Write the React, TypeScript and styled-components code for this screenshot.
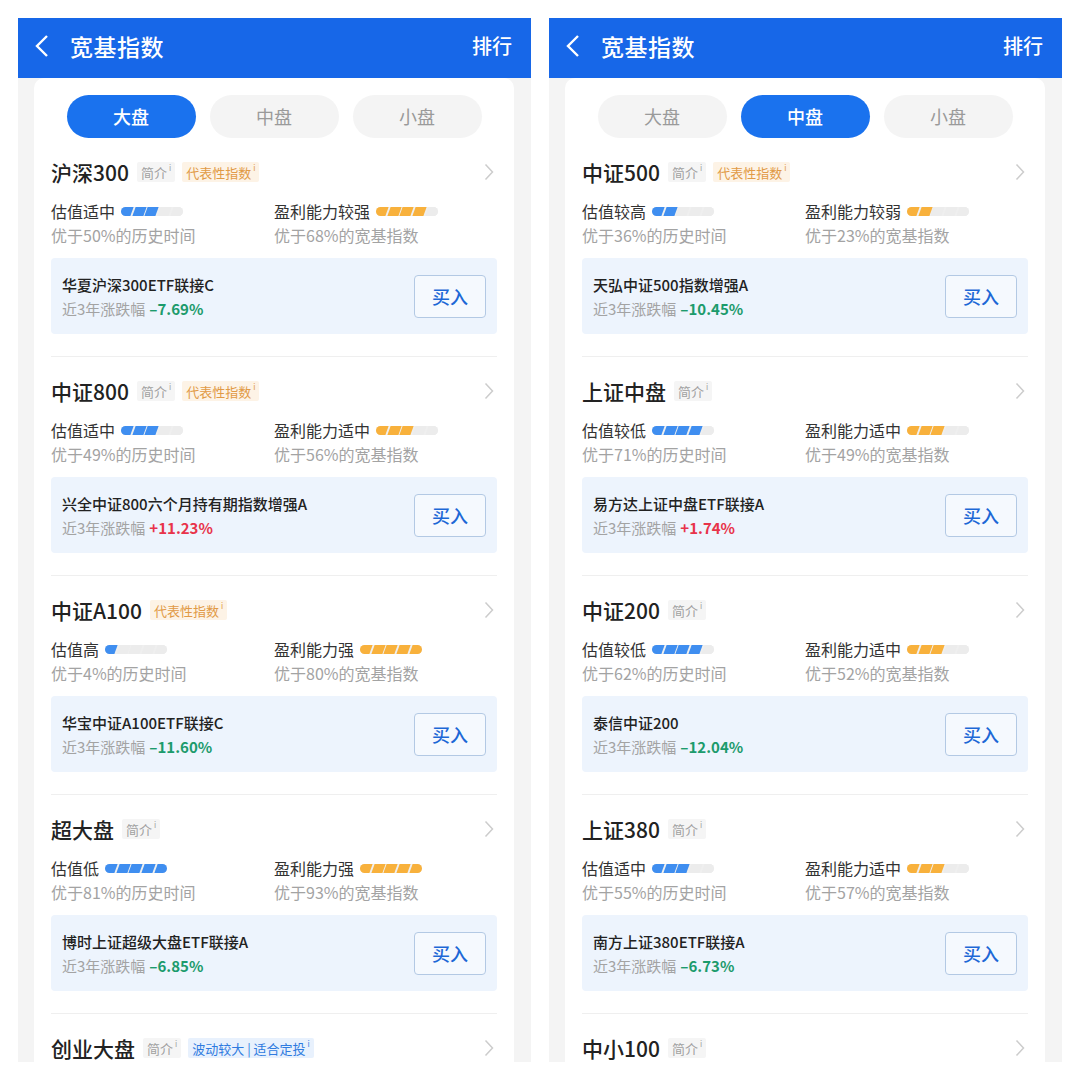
import React from "react";
import styled, { createGlobalStyle, css } from "styled-components";

type Tag = { text: string; tone: "gray" | "orange" | "blue" };

type IndexItem = {
  name: string;
  tags: Tag[];
  value?: { label: string; level: number; note: string };
  profit?: { label: string; level: number; note: string };
  fund?: { name: string; change: string };
};

type Screen = {
  active: number;
  items: IndexItem[];
};

const GlobalStyle = createGlobalStyle`
  body {
    margin: 0;
    background: #ffffff;
    font-family: "Noto Sans CJK SC", "Noto Sans", sans-serif;
  }
`;

const Page = styled.div`
  display: flex;
  gap: 18px;
  padding: 18px;
`;

const Phone = styled.div`
  width: 513px;
  height: 1044px;
  overflow: hidden;
  background: #f4f4f4;
  display: flex;
  flex-direction: column;
`;

const Header = styled.div`
  height: 60px;
  box-sizing: border-box;
  padding: 0 19px 5px 16px;
  flex-shrink: 0;
  background: #1767e8;
  color: #fff;
  display: flex;
  align-items: center;
`;

const Back = styled.div`
  width: 22px;
  height: 24px;
  display: flex;
  align-items: center;
  margin-right: 14px;
`;

const HeaderTitle = styled.div`
  flex: 1;
  font-size: 23px;
  font-weight: 500;
  letter-spacing: 0.5px;
`;

const HeaderAction = styled.div`
  font-size: 20px;
  font-weight: 500;
`;

const Card = styled.div`
  margin: 0 17px 0 16px;
  background: #fff;
  border-radius: 10px 10px 0 0;
  padding: 17px 17px 0;
  flex: 1;
`;

const Tabs = styled.div`
  display: flex;
  justify-content: center;
  gap: 14px;
`;

const TabPill = styled.div<{ $active: boolean }>`
  width: 129px;
  height: 43px;
  box-sizing: border-box;
  padding-bottom: 2px;
  border-radius: 22px;
  display: flex;
  align-items: center;
  justify-content: center;
  font-size: 18px;
  background: ${(p) => (p.$active ? "#1a72ee" : "#f4f4f4")};
  color: ${(p) => (p.$active ? "#fff" : "#9a9a9a")};
  font-weight: ${(p) => (p.$active ? 500 : 400)};
`;

const Section = styled.div`
  padding: 20px 0 22px;
  border-bottom: 1px solid #efefef;
`;

const TitleRow = styled.div`
  height: 28px;
  display: flex;
  align-items: center;
  gap: 7px;
`;

const Title = styled.div`
  font-size: 21px;
  font-weight: 500;
  color: #222;
  margin-right: 1px;
`;

const tagTones = {
  gray: css`
    background: #f5f5f5;
    color: #a0a0a0;
  `,
  orange: css`
    background: #fdf3e6;
    color: #e19a45;
  `,
  blue: css`
    background: #e8f1fd;
    color: #2f7be0;
  `,
};

const TagChip = styled.span<{ $tone: Tag["tone"] }>`
  height: 20px;
  padding: 0 4px;
  border-radius: 2px;
  font-size: 13px;
  display: inline-flex;
  align-items: center;
  ${(p) => tagTones[p.$tone]}
`;

const Sup = styled.sup`
  font-size: 8px;
  margin-left: 2px;
  align-self: flex-start;
  line-height: 12px;
`;

const Chevron = styled.div`
  margin-left: auto;
  margin-right: 3px;
  display: flex;
  align-items: center;
`;

const Metrics = styled.div`
  display: grid;
  grid-template-columns: 1fr 1fr;
  margin-top: 13px;
`;

const MetricLabel = styled.div`
  height: 24px;
  display: flex;
  align-items: center;
  font-size: 16px;
  color: #333;
`;

const MetricNote = styled.div`
  height: 24px;
  display: flex;
  align-items: center;
  font-size: 16px;
  color: #a3a3a3;
`;

const Bar = styled.div`
  width: 62px;
  height: 9px;
  margin-left: 6px;
  border-radius: 5px;
  overflow: hidden;
  background: #efefef;
  display: flex;
  gap: 1.5px;
`;

const Seg = styled.div<{ $color: string; $on: boolean }>`
  flex: 1;
  transform: skewX(-20deg);
  background: ${(p) => (p.$on ? p.$color : "#ececec")};
  &:first-child {
    margin-left: -3px;
    flex: 1.25;
  }
  &:last-child {
    margin-right: -3px;
    flex: 1.25;
  }
`;

const FundBox = styled.div`
  margin-top: 11px;
  height: 76px;
  border-radius: 4px;
  background: #edf4fd;
  display: flex;
  align-items: center;
  padding: 0 11px;
`;

const FundInfo = styled.div`
  flex: 1;
  display: flex;
  flex-direction: column;
  gap: 3px;
`;

const FundName = styled.div`
  font-size: 15px;
  font-weight: 500;
  color: #222;
`;

const FundChange = styled.div`
  font-size: 15px;
  color: #a3a3a3;
`;

const ChangeValue = styled.span<{ $up: boolean }>`
  margin-left: 4px;
  font-weight: 700;
  color: ${(p) => (p.$up ? "#e8334a" : "#1c9b6c")};
`;

const BuyButton = styled.div`
  width: 70px;
  height: 41px;
  border: 1px solid #b3c9e4;
  border-radius: 4px;
  background: #f5f9fe;
  display: flex;
  align-items: center;
  justify-content: center;
  font-size: 18px;
  font-weight: 500;
  color: #1d68d6;
`;

const ChevronIcon = () => (
  <svg width="10" height="18" viewBox="0 0 10 18">
    <path d="M1.5 1.5 L8.5 9 L1.5 16.5" fill="none" stroke="#cccccc" strokeWidth="1.5" />
  </svg>
);

const BackIcon = () => (
  <svg width="16" height="24" viewBox="0 0 16 24">
    <path d="M13 2 L3 12 L13 22" fill="none" stroke="#fff" strokeWidth="2.4" />
  </svg>
);

const Level = ({ level, color }: { level: number; color: string }) => (
  <Bar>
    {[0, 1, 2, 3, 4].map((i) => (
      <Seg key={i} $color={color} $on={i < level} />
    ))}
  </Bar>
);

const IndexSection = ({ item }: { item: IndexItem }) => (
  <Section>
    <TitleRow>
      <Title>{item.name}</Title>
      {item.tags.map((t) => (
        <TagChip key={t.text} $tone={t.tone}>
          {t.text}
          <Sup>i</Sup>
        </TagChip>
      ))}
      <Chevron>
        <ChevronIcon />
      </Chevron>
    </TitleRow>
    {item.value && item.profit && (
      <Metrics>
        <div>
          <MetricLabel>
            {item.value.label}
            <Level level={item.value.level} color="#3f8ef0" />
          </MetricLabel>
          <MetricNote>{item.value.note}</MetricNote>
        </div>
        <div>
          <MetricLabel>
            {item.profit.label}
            <Level level={item.profit.level} color="#f8b13c" />
          </MetricLabel>
          <MetricNote>{item.profit.note}</MetricNote>
        </div>
      </Metrics>
    )}
    {item.fund && (
      <FundBox>
        <FundInfo>
          <FundName>{item.fund.name}</FundName>
          <FundChange>
            近3年涨跌幅
            <ChangeValue $up={item.fund.change.startsWith("+")}>
              {item.fund.change}
            </ChangeValue>
          </FundChange>
        </FundInfo>
        <BuyButton>买入</BuyButton>
      </FundBox>
    )}
  </Section>
);

const intro: Tag = { text: "简介", tone: "gray" };
const rep: Tag = { text: "代表性指数", tone: "orange" };

const screens: Screen[] = [
  {
    active: 0,
    items: [
      {
        name: "沪深300",
        tags: [intro, rep],
        value: { label: "估值适中", level: 3, note: "优于50%的历史时间" },
        profit: { label: "盈利能力较强", level: 4, note: "优于68%的宽基指数" },
        fund: { name: "华夏沪深300ETF联接C", change: "–7.69%" },
      },
      {
        name: "中证800",
        tags: [intro, rep],
        value: { label: "估值适中", level: 3, note: "优于49%的历史时间" },
        profit: { label: "盈利能力适中", level: 3, note: "优于56%的宽基指数" },
        fund: { name: "兴全中证800六个月持有期指数增强A", change: "+11.23%" },
      },
      {
        name: "中证A100",
        tags: [rep],
        value: { label: "估值高", level: 1, note: "优于4%的历史时间" },
        profit: { label: "盈利能力强", level: 5, note: "优于80%的宽基指数" },
        fund: { name: "华宝中证A100ETF联接C", change: "–11.60%" },
      },
      {
        name: "超大盘",
        tags: [intro],
        value: { label: "估值低", level: 5, note: "优于81%的历史时间" },
        profit: { label: "盈利能力强", level: 5, note: "优于93%的宽基指数" },
        fund: { name: "博时上证超级大盘ETF联接A", change: "–6.85%" },
      },
      {
        name: "创业大盘",
        tags: [intro, { text: "波动较大 | 适合定投", tone: "blue" }],
      },
    ],
  },
  {
    active: 1,
    items: [
      {
        name: "中证500",
        tags: [intro, rep],
        value: { label: "估值较高", level: 2, note: "优于36%的历史时间" },
        profit: { label: "盈利能力较弱", level: 2, note: "优于23%的宽基指数" },
        fund: { name: "天弘中证500指数增强A", change: "–10.45%" },
      },
      {
        name: "上证中盘",
        tags: [intro],
        value: { label: "估值较低", level: 4, note: "优于71%的历史时间" },
        profit: { label: "盈利能力适中", level: 3, note: "优于49%的宽基指数" },
        fund: { name: "易方达上证中盘ETF联接A", change: "+1.74%" },
      },
      {
        name: "中证200",
        tags: [intro],
        value: { label: "估值较低", level: 4, note: "优于62%的历史时间" },
        profit: { label: "盈利能力适中", level: 3, note: "优于52%的宽基指数" },
        fund: { name: "泰信中证200", change: "–12.04%" },
      },
      {
        name: "上证380",
        tags: [intro],
        value: { label: "估值适中", level: 3, note: "优于55%的历史时间" },
        profit: { label: "盈利能力适中", level: 3, note: "优于57%的宽基指数" },
        fund: { name: "南方上证380ETF联接A", change: "–6.73%" },
      },
      {
        name: "中小100",
        tags: [intro],
      },
    ],
  },
];

const tabs = ["大盘", "中盘", "小盘"];

export default function App() {
  return (
    <>
      <GlobalStyle />
      <Page>
        {screens.map((s, idx) => (
          <Phone key={idx}>
            <Header>
              <Back>
                <BackIcon />
              </Back>
              <HeaderTitle>宽基指数</HeaderTitle>
              <HeaderAction>排行</HeaderAction>
            </Header>
            <Card>
              <Tabs>
                {tabs.map((t, i) => (
                  <TabPill key={t} $active={i === s.active}>
                    {t}
                  </TabPill>
                ))}
              </Tabs>
              {s.items.map((item) => (
                <IndexSection key={item.name} item={item} />
              ))}
            </Card>
          </Phone>
        ))}
      </Page>
    </>
  );
}
